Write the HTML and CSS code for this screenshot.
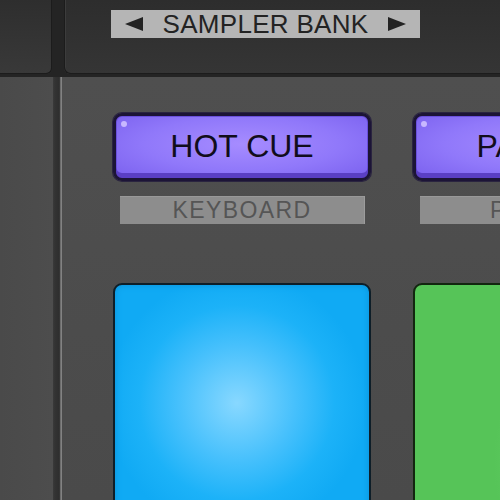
FILE: index.html
```html
<!DOCTYPE html>
<html>
<head>
<meta charset="utf-8">
<link rel="stylesheet" href="styles.css">
</head>
<body>
<div class="page">
  <div class="top">
    <div class="top-left"></div>
    <div class="top-gap"></div>
    <div class="top-panel">
      <div class="bank">
        <span class="tri tri-left"></span>
        <span class="bank-text">SAMPLER BANK</span>
        <span class="tri tri-right"></span>
      </div>
    </div>
  </div>
  <div class="body">
    <div class="side"></div>
    <div class="divider"></div>
    <div class="main">
      <div class="col">
        <div class="btn"><span class="dot"></span>HOT CUE</div>
        <div class="label">KEYBOARD</div>
        <div class="pad pad-blue"></div>
      </div>
      <div class="col">
        <div class="btn"><span class="dot"></span>PAD FX1</div>
        <div class="label">PAD FX2</div>
        <div class="pad pad-green"></div>
      </div>
    </div>
  </div>
</div>
</body>
</html>
```

FILE: styles.css
```css
html, body {
  margin: 0;
  padding: 0;
  width: 500px;
  height: 500px;
  overflow: hidden;
  background: #4b4b4b;
  font-family: "Liberation Sans", Arial, sans-serif;
}
.page {
  width: 500px;
  height: 500px;
  display: flex;
  flex-direction: column;
}
.top {
  height: 77px;
  display: flex;
  background: #242424;
  flex-shrink: 0;
}
.top-left {
  width: 52px;
  flex-shrink: 0;
  height: 74px;
  background: linear-gradient(#2e2e2e, #393939);
  border-bottom-right-radius: 5px;
  box-shadow: inset -1px -1px 0 #1c1c1c;
}
.top-gap {
  width: 12px;
  flex-shrink: 0;
}
.top-panel {
  flex: 1;
  height: 74px;
  background: linear-gradient(#2d2d2d, #353535);
  border-bottom-left-radius: 6px;
  box-shadow: inset 1px -1px 0 #1c1c1c, inset 2px 0 0 #3c3c3c;
  padding-left: 47px;
  padding-top: 10px;
  box-sizing: border-box;
}
.bank {
  width: 309px;
  height: 28px;
  background: #b5b5b5;
  display: flex;
  align-items: center;
  justify-content: space-between;
  padding: 0 14px 0 14px;
  box-sizing: border-box;
  color: #232323;
}
.bank-text {
  font-size: 26px;
  line-height: 28px;
  letter-spacing: 0.3px;
}
.tri {
  width: 0;
  height: 0;
  border-top: 7px solid transparent;
  border-bottom: 7px solid transparent;
}
.tri-left {
  border-right: 18px solid #232323;
}
.tri-right {
  border-left: 18px solid #232323;
}
.body {
  flex: 1;
  display: flex;
  background: #4b4b4b;
  min-height: 0;
}
.side {
  width: 53px;
  flex-shrink: 0;
  background: linear-gradient(90deg, #4a4a4a, #4d4d4d);
}
.divider {
  width: 9px;
  flex-shrink: 0;
  background: linear-gradient(90deg, #3a3a3a 0, #333 2px, #2e2e2e 6px, #3c3c3c 7px, #9a9a9a 8px, #6a6a6a 9px);
}
.main {
  flex: 1;
  min-width: 0;
  overflow: hidden;
  display: flex;
  align-items: flex-start;
  gap: 42px;
  padding-left: 51px;
  padding-top: 36px;
  background: linear-gradient(#4f4f4f, #4a4a4a);
}
.col {
  width: 258px;
  flex-shrink: 0;
  display: flex;
  flex-direction: column;
  align-items: center;
}
.col > * {
  flex-shrink: 0;
}
.btn {
  position: relative;
  width: 258px;
  height: 68px;
  box-sizing: border-box;
  border: 3px solid #1c1436;
  border-radius: 9px;
  background: radial-gradient(ellipse at 50% 45%, #a68cff 0%, #9078fa 55%, #7a60ee 100%);
  box-shadow: inset 0 -5px 0 #5a3fc4, inset 0 0 0 1px #6a50dc, 0 0 0 1px #2a2440;
  display: flex;
  align-items: center;
  justify-content: center;
  font-size: 32px;
  color: #110d1c;
  padding-bottom: 1px;
  white-space: nowrap;
}
.dot {
  position: absolute;
  left: 5px;
  top: 5px;
  width: 6px;
  height: 6px;
  border-radius: 50%;
  background: #c8b8ff;
}
.label {
  margin-top: 15px;
  width: 245px;
  height: 28px;
  background: #8d8d8d;
  box-shadow: inset -1px 0 0 #9c9c9c, inset 0 1px 0 #999;
  color: #555555;
  font-size: 23px;
  line-height: 29px;
  letter-spacing: 1.4px;
  text-align: center;
  white-space: nowrap;
}
.pad {
  margin-top: 59px;
  width: 258px;
  height: 240px;
  box-sizing: border-box;
  border: 2px solid #0e1e28;
  border-radius: 9px;
}
.pad-blue {
  background: radial-gradient(ellipse 130px 130px at 48% 50%, #88d8ff 0%, #46c0fc 45%, #1cb2f8 75%, #10aaf4 100%);
  box-shadow: inset 0 0 6px #0a90d8;
}
.pad-green {
  border-color: #12260f;
  background: radial-gradient(ellipse 150px 160px at 90% 75%, #88e888 0%, #6ad46c 50%, #56c458 100%);
}
```
